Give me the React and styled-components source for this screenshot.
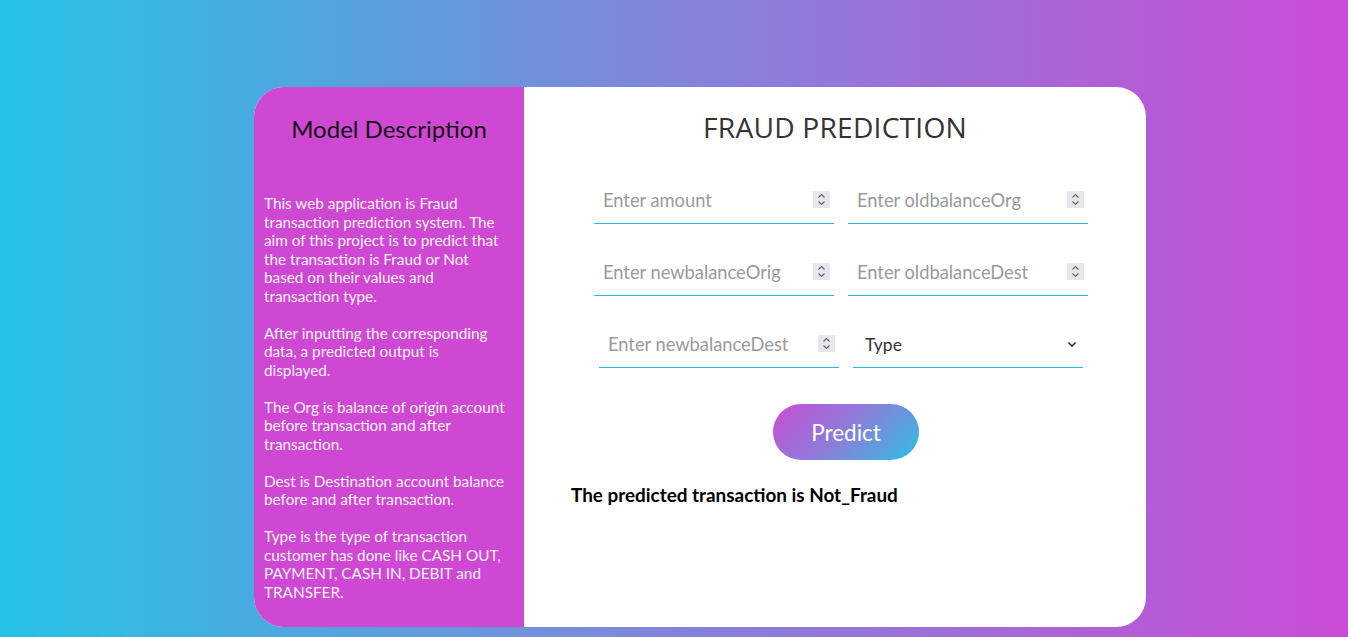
import React from 'react';
import styled, { createGlobalStyle } from 'styled-components';

const GlobalStyle = createGlobalStyle`
	html, body {
		margin: 0;
		padding: 0;
	}
	body {
		width: 1348px;
		height: 637px;
		overflow: hidden;
		background: linear-gradient(90deg, #25c3e5 0%, #7b8ad9 45%, #c94bd6 100%);
		font-family: Lato, "Open Sans", sans-serif;
	}
`;

const Page = styled.div`
	padding: 87px 0 0 254px;
`;

const Card = styled.div`
	display: flex;
	width: 892px;
	height: 540px;
	border-radius: 30px;
	overflow: hidden;
	background: #ffffff;
`;

const Side = styled.div`
	width: 270px;
	padding: 0 17px 0 10px;
	box-sizing: border-box;
	background: #cf48d3;
	color: #fdf2fd;
`;

const SideTitle = styled.h2`
	margin: 27px -7px 51px 0;
	height: 29px;
	line-height: 29px;
	text-align: center;
	font-size: 24px;
	font-weight: 400;
	color: #111;
`;

const SideText = styled.p`
	margin: 0 0 18.5px;
	font-size: 15.3px;
	line-height: 18.5px;
`;

const Main = styled.div`
	flex: 1;
	display: flex;
	flex-direction: column;
`;

const Title = styled.h1`
	margin: 20px 0 38px;
	height: 40px;
	line-height: 40px;
	text-align: center;
	font-family: "Open Sans", sans-serif;
	font-size: 28.2px;
	font-weight: 400;
	color: #333;
	letter-spacing: 0.2px;
`;

const Form = styled.form`
	display: flex;
	flex-direction: column;
	padding-left: 12px;
`;

const Row = styled.div`
	display: flex;
	justify-content: center;
	gap: 14px;
	margin-bottom: 33px;
`;

const Field = styled.div`
	position: relative;
	width: ${({ w }) => w || 240}px;
	height: 38px;
	border-bottom: 1px solid #22bde0;
`;

const Input = styled.input`
	width: 100%;
	height: 100%;
	box-sizing: border-box;
	border: none;
	outline: none;
	padding: 0 28px 8px 9px;
	font-family: Lato, sans-serif;
	font-size: 18.3px;
	color: #333;
	background: transparent;
	&::placeholder {
		color: #9a9a9a;
	}
`;

const Spinner = styled.span`
	position: absolute;
	right: 4px;
	top: 6px;
	width: 17px;
	height: 17px;
	background: #e6e6ec;
	display: flex;
	align-items: center;
	justify-content: center;
`;

const Select = styled.select`
	width: 100%;
	height: 100%;
	box-sizing: border-box;
	border: none;
	outline: none;
	appearance: none;
	padding: 0 12px 8px;
	font-family: Lato, sans-serif;
	font-size: 17.5px;
	color: #333;
	background: transparent;
`;

const Chevron = styled.span`
	position: absolute;
	right: 6px;
	top: 12px;
	display: flex;
	pointer-events: none;
`;

const ButtonWrap = styled.div`
	display: flex;
	justify-content: center;
	padding-left: 10px;
	margin-top: 3px;
`;

const PredictButton = styled.button`
	width: 146px;
	height: 56px;
	border: none;
	border-radius: 28px;
	background: linear-gradient(135deg, #c84dd6 0%, #8a7ed9 50%, #2fbfe3 100%);
	color: #fff;
	font-family: Lato, sans-serif;
	font-size: 22.5px;
	font-weight: 400;
	cursor: pointer;
`;

const Result = styled.p`
	margin: 23px 0 0 47px;
	line-height: 23px;
	font-size: 18.9px;
	font-weight: 700;
	color: #000;
`;

const SpinIcon = () => (
	<svg width="9" height="13" viewBox="0 0 9 13" fill="none" stroke="#666" strokeWidth="1.2">
		<path d="M1.5 4.5 L4.5 1.5 L7.5 4.5" />
		<path d="M1.5 8.5 L4.5 11.5 L7.5 8.5" />
	</svg>
);

const NumberField = ({ placeholder, w }) => (
	<Field w={w}>
		<Input type="text" placeholder={placeholder} />
		<Spinner><SpinIcon /></Spinner>
	</Field>
);

export default function App() {
	return (
		<>
			<GlobalStyle />
			<Page>
				<Card>
					<Side>
						<SideTitle>Model Description</SideTitle>
						<SideText>This web application is Fraud transaction prediction system. The aim of this project is to predict that the transaction is Fraud or Not based on their values and transaction type.</SideText>
						<SideText>After inputting the corresponding data, a predicted output is displayed.</SideText>
						<SideText>The Org is balance of origin account before transaction and after transaction.</SideText>
						<SideText>Dest is Destination account balance before and after transaction.</SideText>
						<SideText>Type is the type of transaction customer has done like CASH OUT, PAYMENT, CASH IN, DEBIT and TRANSFER.</SideText>
					</Side>
					<Main>
						<Title>FRAUD PREDICTION</Title>
						<Form>
							<Row>
								<NumberField placeholder="Enter amount" />
								<NumberField placeholder="Enter oldbalanceOrg" />
							</Row>
							<Row>
								<NumberField placeholder="Enter newbalanceOrig" />
								<NumberField placeholder="Enter oldbalanceDest" />
							</Row>
							<Row>
								<NumberField placeholder="Enter newbalanceDest" />
								<Field w={230}>
									<Select defaultValue="">
										<option value="" disabled>Type</option>
										<option>CASH_OUT</option>
										<option>PAYMENT</option>
										<option>CASH_IN</option>
										<option>DEBIT</option>
										<option>TRANSFER</option>
									</Select>
									<Chevron>
										<svg width="10" height="7" viewBox="0 0 10 7" fill="none" stroke="#333" strokeWidth="1.6">
											<path d="M1.5 1.5 L5 5 L8.5 1.5" />
										</svg>
									</Chevron>
								</Field>
							</Row>
							<ButtonWrap>
								<PredictButton type="button">Predict</PredictButton>
							</ButtonWrap>
						</Form>
						<Result>The predicted transaction is Not_Fraud</Result>
					</Main>
				</Card>
			</Page>
		</>
	);
}
